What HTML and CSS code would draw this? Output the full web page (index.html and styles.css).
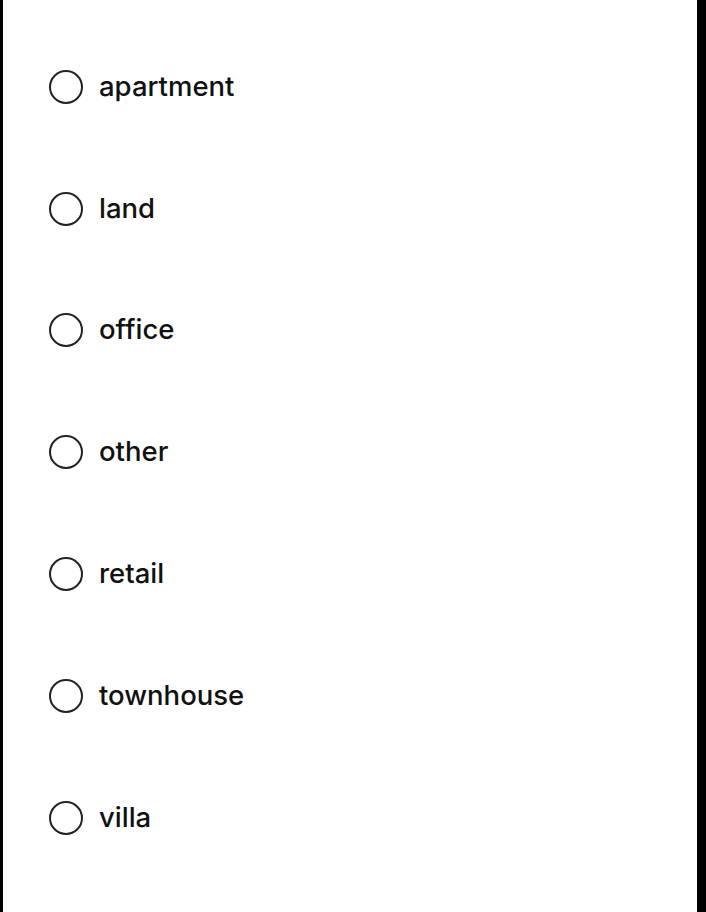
FILE: index.html
```html
<!DOCTYPE html>
<html>
<head>
<meta charset="utf-8">
<link rel="stylesheet" href="styles.css">
</head>
<body>
<div class="panel">
  <ul class="options">
    <li class="option"><span class="radio"></span><span class="label">apartment</span></li>
    <li class="option"><span class="radio"></span><span class="label">land</span></li>
    <li class="option"><span class="radio"></span><span class="label">office</span></li>
    <li class="option"><span class="radio"></span><span class="label">other</span></li>
    <li class="option"><span class="radio"></span><span class="label">retail</span></li>
    <li class="option"><span class="radio"></span><span class="label">townhouse</span></li>
    <li class="option"><span class="radio"></span><span class="label">villa</span></li>
  </ul>
</div>
</body>
</html>
```

FILE: styles.css
```css
html, body {
  margin: 0;
  padding: 0;
  background: #000;
  height: 100%;
}
.panel {
  margin: 0 9px 0 3px;
  background: #fff;
  height: 912px;
  box-sizing: border-box;
  padding-top: 26px;
}
.options {
  list-style: none;
  margin: 0;
  padding: 0 0 0 46px;
  display: flex;
  flex-direction: column;
}
.option {
  display: flex;
  align-items: center;
  gap: 16px;
  height: 121.8px;
  font-family: Inter, "Liberation Sans", sans-serif;
  font-size: 27.5px;
  font-weight: 500;
  color: #111;
}
.label {
  margin-bottom: 2px;
}
.radio {
  width: 30px;
  height: 30px;
  border: 2px solid #222;
  border-radius: 50%;
  flex: none;
}
```
